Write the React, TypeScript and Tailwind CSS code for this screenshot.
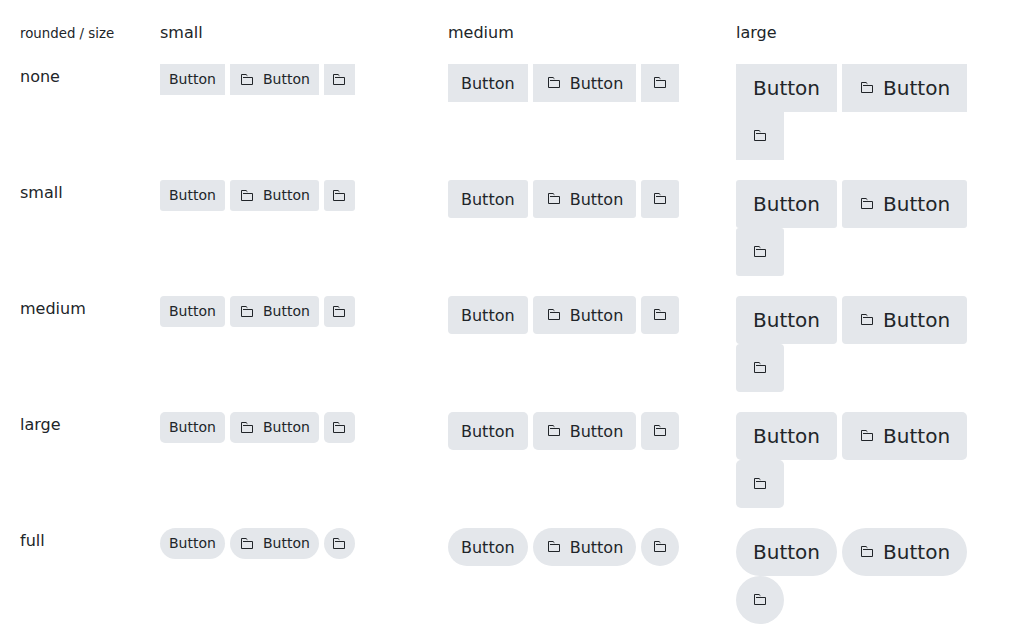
import clsx from "clsx";

type Size = "small" | "medium" | "large";
type Rounded = "none" | "small" | "medium" | "large" | "full";

const sizes: Size[] = ["small", "medium", "large"];
const roundings: Rounded[] = ["none", "small", "medium", "large", "full"];

const sizeClasses: Record<Size, string> = {
  small: "h-[31px] text-sm leading-[21px]",
  medium: "h-[38px] text-base leading-[25px]",
  large: "h-12 text-xl",
};

const paddingClasses: Record<Size, string> = {
  small: "px-[9px]",
  medium: "px-[13px]",
  large: "px-[17px]",
};

const squareClasses: Record<Size, string> = {
  small: "w-[31px] pr-px",
  medium: "w-[38px]",
  large: "w-12",
};

const roundedClasses: Record<Rounded, string> = {
  none: "rounded-none",
  small: "rounded-[3px]",
  medium: "rounded-[4px]",
  large: "rounded-[5px]",
  full: "rounded-full",
};

function FolderIcon() {
  return (
    <svg
      className="size-4 shrink-0"
      viewBox="0 0 16 16"
      fill="none"
      stroke="currentColor"
      strokeLinejoin="round"
      aria-hidden="true"
    >
      <path d="M4 5.5h9.5v7h-11v-10h4.5l1.4 1.2" />
    </svg>
  );
}

interface ButtonProps {
  size: Size;
  rounded: Rounded;
  icon?: boolean;
  label?: string;
}

function Button({ size, rounded, icon, label }: ButtonProps) {
  return (
    <button
      type="button"
      aria-label={label ? undefined : "Folder"}
      className={clsx(
        "inline-flex cursor-pointer items-center justify-center gap-2 bg-[#e4e7eb] align-middle hover:bg-[#d5d9df]",
        sizeClasses[size],
        roundedClasses[rounded],
        label ? paddingClasses[size] : squareClasses[size],
      )}
    >
      {icon && <FolderIcon />}
      {label}
    </button>
  );
}

export default function App() {
  return (
    <main className="pt-5 pl-5 font-['DejaVu_Sans',sans-serif] text-base text-[#212529]">
      <table className="w-full table-fixed text-left">
        <thead>
          <tr>
            <th scope="col" className="w-[140px] pb-[18px] align-top leading-[25px] font-normal">
              <small className="text-[length:smaller]">rounded / size</small>
            </th>
            {sizes.map((size) => (
              <th key={size} scope="col" className="pr-5 pb-[18px] align-top leading-[25px] font-normal">
                {size}
              </th>
            ))}
          </tr>
        </thead>
        <tbody>
          {roundings.map((rounded) => (
            <tr key={rounded}>
              <th scope="row" className="pb-[18px] align-top leading-[25px] font-normal">
                {rounded}
              </th>
              {sizes.map((size) => (
                <td key={size} className="pr-5 pb-5 align-top">
                  <Button size={size} rounded={rounded} label="Button" />{" "}
                  <Button size={size} rounded={rounded} icon label="Button" />{" "}
                  <Button size={size} rounded={rounded} icon />
                </td>
              ))}
            </tr>
          ))}
        </tbody>
      </table>
    </main>
  );
}
